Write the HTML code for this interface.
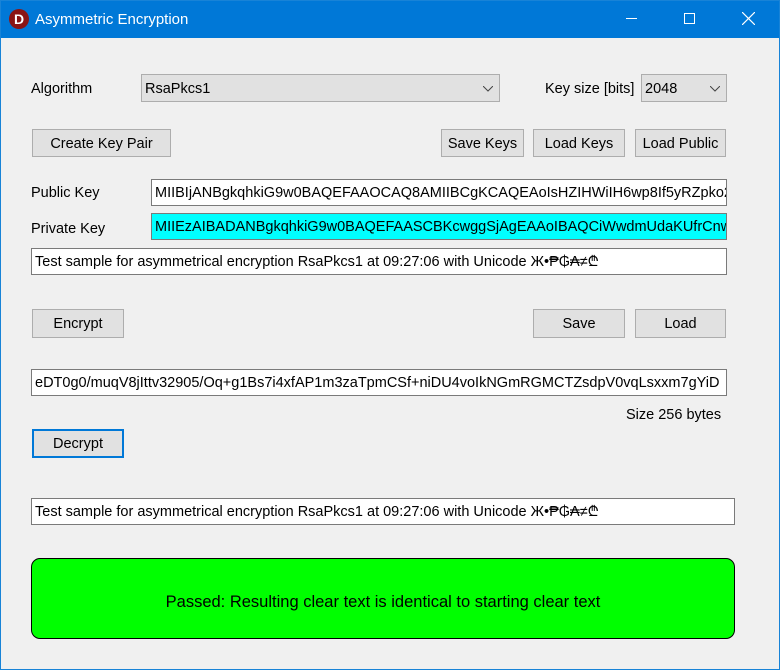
<!DOCTYPE html>
<html><head><meta charset="utf-8"><style>
*{margin:0;padding:0;box-sizing:border-box}
body{width:780px;height:670px;background:#f0f0f0;font-family:"Liberation Sans","DejaVu Sans",sans-serif;font-size:14.5px;color:#000;position:relative;overflow:hidden}
.frame{position:absolute;left:0;top:0;width:780px;height:670px;border:1px solid #1883d7}
.title{position:absolute;left:0;top:0;width:780px;height:38px;background:#0078d7;color:#fff}
.a{position:absolute;white-space:nowrap}
.btn{position:absolute;background:#e1e1e1;border:1px solid #adadad;text-align:center;line-height:28px}
.inp{position:absolute;background:#fff;border:1px solid #7a7a7a;padding-left:3px;line-height:27px;overflow:hidden;white-space:nowrap}
.cb{position:absolute;background:#e1e1e1;border:1px solid #adadad;padding-left:3px;line-height:28px}
.chev{position:absolute;right:6px;top:11px}
</style></head><body>
<div class="title">
 <div class="a" style="left:9px;top:9px;width:20px;height:20px;border-radius:50%;background:#8a1414;color:#fff;font-weight:bold;font-size:14px;text-align:center;line-height:20px">D</div>
 <div class="a" style="left:35px;top:11px;font-size:15px">Asymmetric Encryption</div>
 <div class="a" style="left:626px;top:18px;width:11px;height:1px;background:#fff"></div>
 <div class="a" style="left:684px;top:13px;width:11px;height:11px;border:1px solid #fff"></div>
 <svg class="a" style="left:742px;top:12px" width="13" height="13"><path d="M0 0L13 13M13 0L0 13" stroke="#fff" stroke-width="1.2"/></svg>
</div>
<div class="frame"></div>

<div class="a" style="left:31px;top:81px">Algorithm</div>
<div class="cb" style="left:141px;top:74px;width:359px;height:28px">RsaPkcs1<svg class="chev" width="10" height="6"><path d="M0 0L5 5L10 0" fill="none" stroke="#444"/></svg></div>
<div class="a" style="left:545px;top:81px">Key size [bits]</div>
<div class="cb" style="left:641px;top:74px;width:86px;height:28px">2048<svg class="chev" width="10" height="6"><path d="M0 0L5 5L10 0" fill="none" stroke="#444"/></svg></div>

<div class="btn" style="left:32px;top:129px;width:139px;height:28px">Create Key Pair</div>
<div class="btn" style="left:441px;top:129px;width:83px;height:28px">Save Keys</div>
<div class="btn" style="left:533px;top:129px;width:92px;height:28px">Load Keys</div>
<div class="btn" style="left:635px;top:129px;width:91px;height:28px">Load Public</div>

<div class="a" style="left:31px;top:185px">Public Key</div>
<div class="inp" style="left:151px;top:179px;width:576px;height:27px">MIIBIjANBgkqhkiG9w0BAQEFAAOCAQ8AMIIBCgKCAQEAoIsHZIHWiIH6wp8If5yRZpko2</div>
<div class="a" style="left:31px;top:221px">Private Key</div>
<div class="inp" style="left:151px;top:213px;width:576px;height:27px;background:#00ffff">MIIEzAIBADANBgkqhkiG9w0BAQEFAASCBKcwggSjAgEAAoIBAQCiWwdmUdaKUfrCnw</div>
<div class="inp" style="left:31px;top:248px;width:696px;height:27px">Test sample for asymmetrical encryption RsaPkcs1 at 09:27:06 with Unicode Ж•₱₲₳≠₾</div>

<div class="btn" style="left:32px;top:309px;width:92px;height:29px">Encrypt</div>
<div class="btn" style="left:533px;top:309px;width:92px;height:29px">Save</div>
<div class="btn" style="left:635px;top:309px;width:91px;height:29px">Load</div>

<div class="inp" style="left:31px;top:369px;width:696px;height:27px">eDT0g0/muqV8jIttv32905/Oq+g1Bs7i4xfAP1m3zaTpmCSf+niDU4voIkNGmRGMCTZsdpV0vqLsxxm7gYiD</div>
<div class="a" style="left:626px;top:407px">Size 256 bytes</div>
<div class="btn" style="left:32px;top:429px;width:92px;height:29px;border:2px solid #0078d7;line-height:27px">Decrypt</div>

<div class="inp" style="left:31px;top:498px;width:704px;height:27px">Test sample for asymmetrical encryption RsaPkcs1 at 09:27:06 with Unicode Ж•₱₲₳≠₾</div>

<div class="a" style="left:31px;top:558px;width:704px;height:81px;background:#00ff00;border:1px solid #000;border-radius:9px;text-align:center;line-height:87px;font-size:16.5px">Passed: Resulting clear text is identical to starting clear text</div>
</body></html>
